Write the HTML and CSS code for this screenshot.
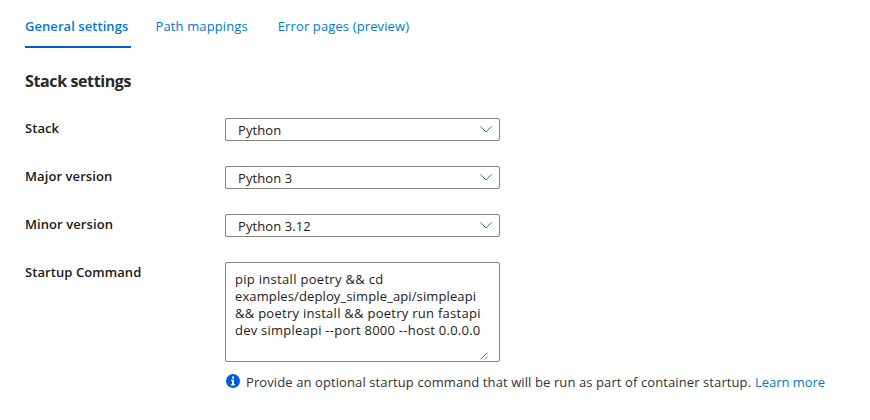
FILE: index.html
```
<!DOCTYPE html>
<html lang="en">
<head>
<meta charset="utf-8">
<title>General settings</title>
<link rel="stylesheet" href="styles.css">
</head>
<body>
<nav class="tabs">
  <a class="tab tab-active">General settings</a>
  <a class="tab">Path mappings</a>
  <a class="tab">Error pages (preview)</a>
</nav>
<main class="panel">
  <h2 class="heading">Stack settings</h2>
  <div class="row">
    <span class="label">Stack</span>
    <div class="select">Python<svg class="chevron" width="12" height="7" viewBox="0 0 12 7"><path d="M.5.5 6 6 11.5.5"/></svg></div>
  </div>
  <div class="row">
    <span class="label">Major version</span>
    <div class="select">Python 3<svg class="chevron" width="12" height="7" viewBox="0 0 12 7"><path d="M.5.5 6 6 11.5.5"/></svg></div>
  </div>
  <div class="row">
    <span class="label">Minor version</span>
    <div class="select">Python 3.12<svg class="chevron" width="12" height="7" viewBox="0 0 12 7"><path d="M.5.5 6 6 11.5.5"/></svg></div>
  </div>
  <div class="row row-command">
    <span class="label">Startup Command</span>
    <div class="field">
      <div class="command">
        <span class="line line-pip">pip install poetry &amp;&amp; cd</span>
        <span class="line line-path">examples/deploy_simple_api/simpleapi</span>
        <span class="line line-install">&amp;&amp; poetry install &amp;&amp; poetry run fastapi</span>
        <span class="line line-dev">dev simpleapi --port 8000 --host 0.0.0.0</span>
        <svg class="grip" width="8" height="8" viewBox="0 0 8 8"><path d="M.5 7.5l7-7M4.5 7.5l3-3"/></svg>
      </div>
      <p class="hint">
        <svg class="info" width="14" height="14" viewBox="0 0 14 14"><circle cx="7" cy="7" r="7"/><path d="M6 2.4h2v2H6zM5 5.7h3v4.6h1v1.2H5v-1.2h1V6.9H5z"/></svg>
        <span class="hint-text">Provide an optional startup command that will be run as part of container startup.</span>
        <a class="link">Learn more</a>
      </p>
    </div>
  </div>
</main>
</body>
</html>
```
FILE: styles.css
```
body {
  margin: 0;
  min-height: 420px;
  background: #fff;
  color: #1b1a19;
  font: 13px/18px "Open Sans", "Noto Sans", sans-serif;
  letter-spacing: .08px;
  white-space: nowrap;
}
.tabs { display: flex; padding: 17px 25px 0; }
.tab { height: 29px; margin-right: 30px; color: #0078d4; letter-spacing: .12px; }
.tab-active {
  width: 106px;
  margin-right: 24.5px;
  border-bottom: 2px solid #015cda;
  font-weight: 600;
  letter-spacing: .06px;
}
.panel { padding: 21px 25px 0; }
.heading {
  margin: 0 0 25px;
  font-size: 16px;
  line-height: 24px;
  font-weight: 700;
  letter-spacing: -.38px;
  color: #292827;
}
.row { display: flex; height: 24px; margin-bottom: 24px; }
.row-command { height: auto; margin-bottom: 0; }
.label { width: 200px; padding-top: 1px; font-weight: 600; }
.select {
  display: flex;
  box-sizing: border-box;
  width: 275px;
  height: 23px;
  padding: 1px 7px 0 12px;
  align-items: center;
  justify-content: space-between;
  border: 1px solid #858382;
  border-radius: 2px;
}
.chevron { fill: none; stroke: #2a75b8; stroke-width: 1; margin-bottom: 1px; }
.command {
  position: relative;
  box-sizing: border-box;
  width: 275px;
  height: 100px;
  padding: 8px 9px;
  border: 1px solid #858382;
  border-radius: 2px;
}
.line { display: block; line-height: 17px; }
.line-pip { letter-spacing: .3px; }
.line-path { letter-spacing: .12px; }
.line-install { letter-spacing: .27px; }
.line-dev { letter-spacing: .24px; }
.grip { position: absolute; right: 11px; bottom: 1px; fill: none; stroke: #555; stroke-width: .8; }
.hint { display: flex; align-items: center; margin: 11px 0 0; padding-left: 1px; color: #323130; }
.info { margin: 0 6px 2px 0; fill: #015cda; }
.info path { fill: #fff; }
.hint-text { width: 509px; letter-spacing: .1px; }
.link { color: #0078d4; letter-spacing: -.03px; }
```
